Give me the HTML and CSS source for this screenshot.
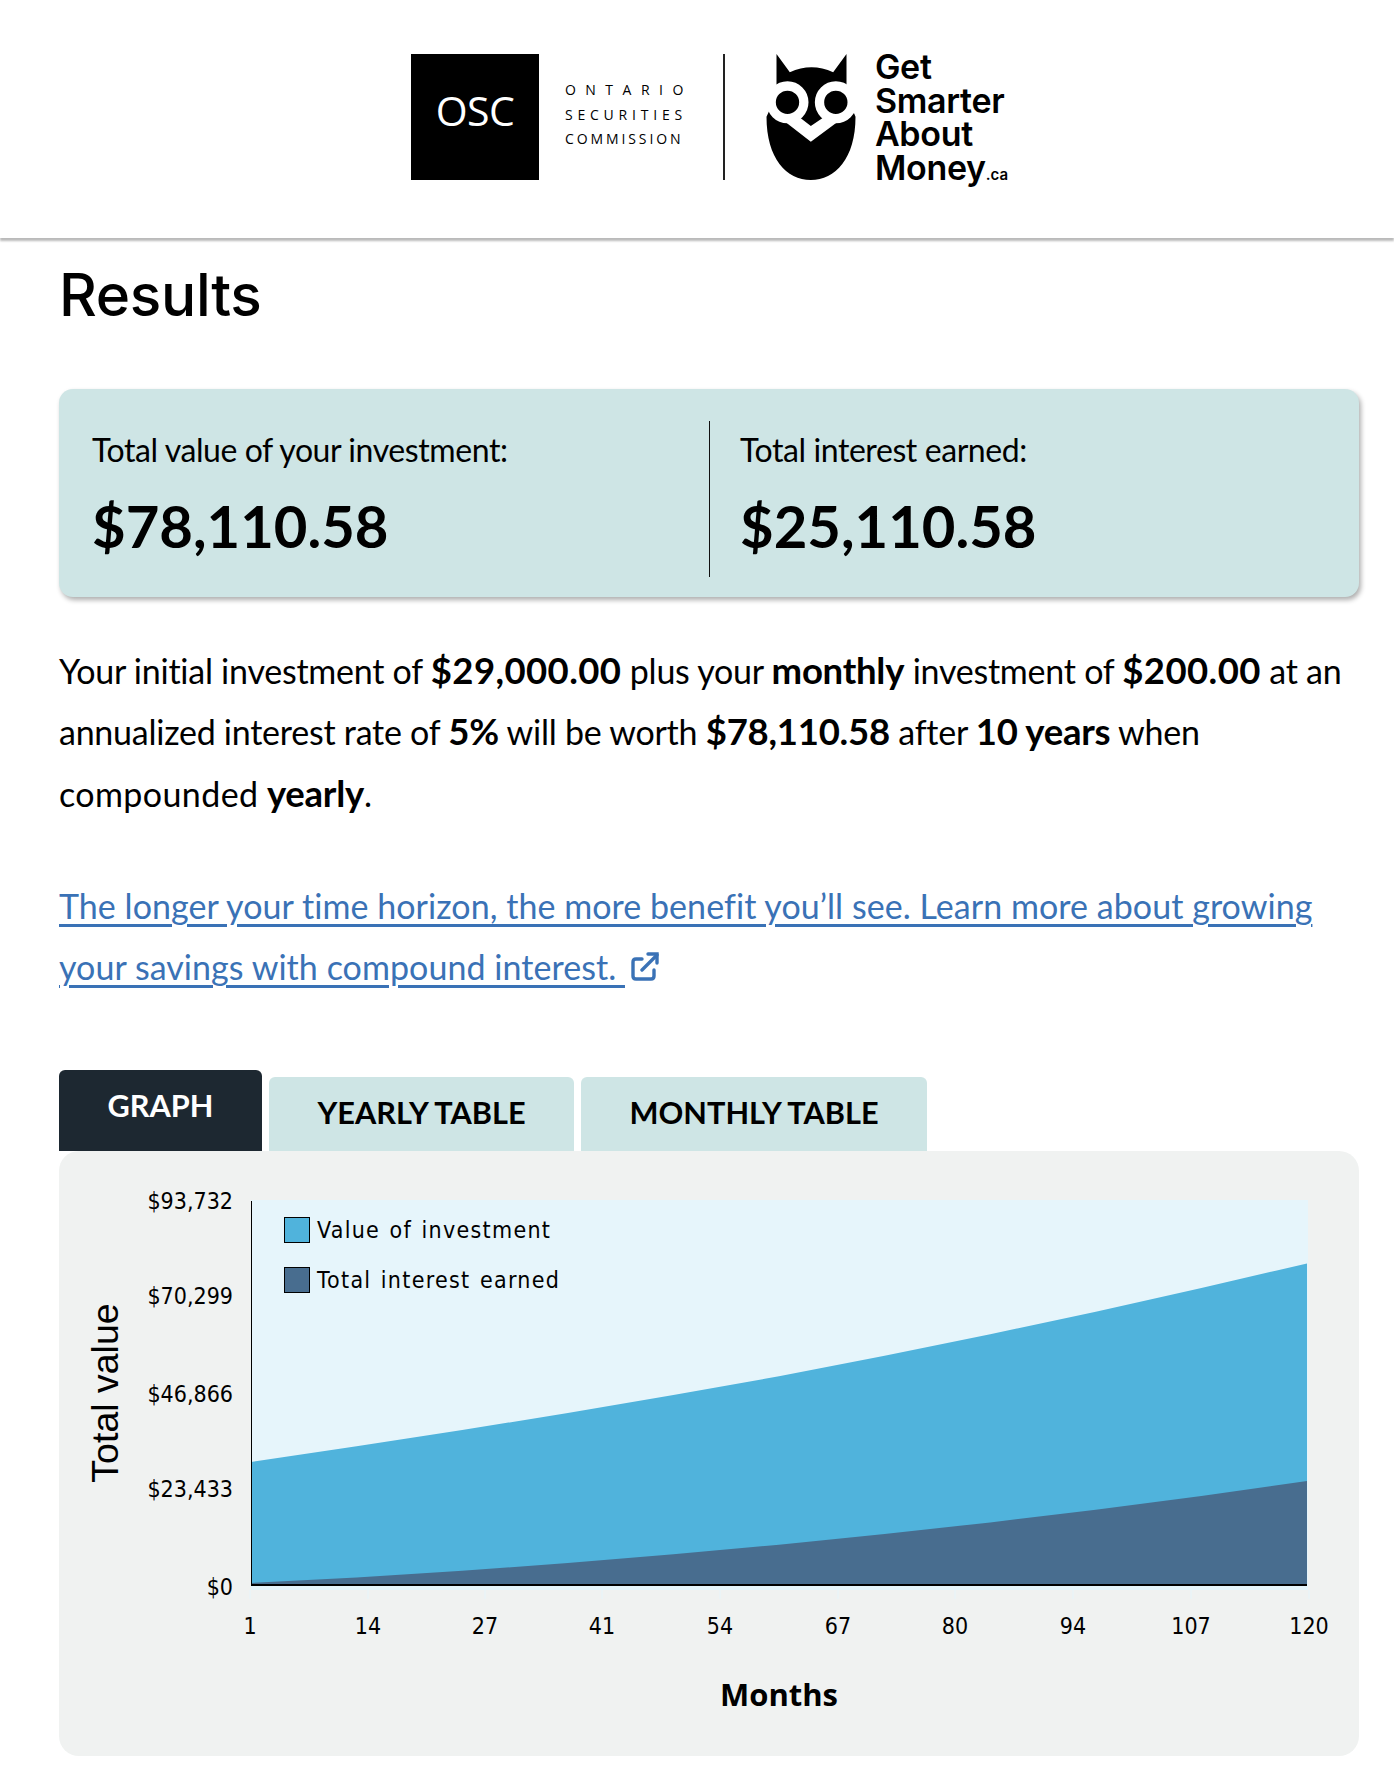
FILE: index.html
```html
<!DOCTYPE html>
<html lang="en">
<head>
<meta charset="utf-8">
<title>Compound interest results</title>
<link rel="stylesheet" href="styles.css">
</head>
<body>
<header class="site-header">
  <div class="osc-box">OSC</div>
  <div class="osc-name">
    <span class="osc-line osc-line-a">ONTARIO</span>
    <span class="osc-line osc-line-b">SECURITIES</span>
    <span class="osc-line osc-line-c">COMMISSION</span>
  </div>
  <div class="logo-divider"></div>
  <svg class="owl" viewBox="50 27 267 378" aria-hidden="true">
    <path d="M80 27 L120 82 Q185 52 250 82 L290 27 V150 L317 215 C317 340 256 405 183 405 C110 405 50 340 50 215 L80 150 Z" fill="#000"/>
    <circle cx="113" cy="172" r="49" fill="#000" stroke="#fff" stroke-width="28"/>
    <circle cx="258" cy="172" r="49" fill="#000" stroke="#fff" stroke-width="28"/>
    <path d="M100 226 L147 215 L183 243 L224 215 L270 226 L183 290 Z" fill="#fff"/>
  </svg>
  <div class="gsam">
    <span>Get</span>
    <span>Smarter</span>
    <span>About</span>
    <span>Money<small class="gsam-ca">.ca</small></span>
  </div>
</header>

<main class="content">
  <h1 class="title">Results</h1>

  <section class="summary">
    <div class="summary-col summary-left">
      <p class="summary-label">Total value of your investment:</p>
      <p class="summary-value">$78,110.58</p>
    </div>
    <div class="summary-col summary-right">
      <p class="summary-label">Total interest earned:</p>
      <p class="summary-value">$25,110.58</p>
    </div>
  </section>

  <p class="prose">Your initial investment of <b class="wide">$29,000.00</b> plus your <b>monthly</b> investment of <b class="wide">$200.00</b> at an annualized interest rate of <b>5%</b> will be worth <b>$78,110.58</b> after <b>10 years</b> when <span class="wide">compounded</span> <b>yearly</b>.</p>

  <p class="prose prose-link"><a class="link" href="#">The longer your time horizon, the more benefit you’ll see. Learn more about growing your savings with compound interest.&nbsp;</a><svg class="ext" viewBox="0 0 28 29" aria-hidden="true"><path d="M11 7 H5 Q2 7 2 10 V24 Q2 27 5 27 H20 Q23 27 23 24 V18" /><path d="M11 18 L26 3" /><path d="M17 2 H26 V11" /></svg></p>

  <nav class="tabs">
    <a class="tab tab-active" href="#">GRAPH</a>
    <a class="tab" href="#">YEARLY TABLE</a>
    <a class="tab" href="#">MONTHLY TABLE</a>
  </nav>

  <section class="panel">
    <svg class="chart" viewBox="0 0 1301 604" aria-label="Total value by month">
      <rect class="plot-bg" x="192" y="49" width="1057" height="390"/>
      <polygon class="area-value" points="192,434 192,311 297.6,295.2 403.2,279 508.8,262 614.4,244 720,225.3 825.6,204.8 931.2,183.3 1036.8,160.7 1142.4,137 1248,112.5 1248,434"/>
      <polygon class="area-interest" points="192,434 192,432 297.6,426.6 403.2,419.8 508.8,412 614.4,403.3 720,393.7 825.6,383.1 931.2,371.4 1036.8,358.7 1142.4,344.9 1248,330 1248,434"/>
      <line class="axis" x1="192.5" y1="50" x2="192.5" y2="434"/>
      <line class="axis axis-x" x1="192" y1="434" x2="1248" y2="434"/>

      <g class="ticks">
        <line x1="191" y1="439" x2="191" y2="448"/><line x1="309" y1="439" x2="309" y2="448"/>
        <line x1="426" y1="439" x2="426" y2="448"/><line x1="543" y1="439" x2="543" y2="448"/>
        <line x1="661" y1="439" x2="661" y2="448"/><line x1="779" y1="439" x2="779" y2="448"/>
        <line x1="896" y1="439" x2="896" y2="448"/><line x1="1014" y1="439" x2="1014" y2="448"/>
        <line x1="1132" y1="439" x2="1132" y2="448"/><line x1="1250" y1="439" x2="1250" y2="448"/>
      </g>

      <g class="y-labels">
        <text x="174" y="58">$93,732</text>
        <text x="174" y="153">$70,299</text>
        <text x="174" y="251">$46,866</text>
        <text x="174" y="346">$23,433</text>
        <text x="174" y="444">$0</text>
      </g>
      <g class="x-labels">
        <text x="191" y="483">1</text><text x="309" y="483">14</text>
        <text x="426" y="483">27</text><text x="543" y="483">41</text>
        <text x="661" y="483">54</text><text x="779" y="483">67</text>
        <text x="896" y="483">80</text><text x="1014" y="483">94</text>
        <text x="1132" y="483">107</text><text x="1250" y="483">120</text>
      </g>

      <rect class="swatch swatch-value" x="225.5" y="66.5" width="25" height="25"/>
      <text class="legend" x="258" y="87">Value of investment</text>
      <rect class="swatch swatch-interest" x="225.5" y="116.5" width="25" height="25"/>
      <text class="legend" x="258" y="137">Total interest earned</text>

      <text class="y-title" transform="translate(59 242) rotate(-90)">Total value</text>
      <text class="x-title" x="720" y="555">Months</text>
    </svg>
  </section>
</main>
</body>
</html>
```

FILE: styles.css
```css
* { box-sizing: border-box; }

html, body {
  margin: 0;
  padding: 0;
  background: #fff;
  color: #000;
  font-family: "Lato", "Noto Sans", sans-serif;
}

.site-header {
  display: flex;
  align-items: flex-start;
  justify-content: center;
  height: 238px;
  padding: 54px 0 0 25px;
  box-shadow: 0 3px 2px rgba(0, 0, 0, .27);
}

.osc-box {
  width: 128px;
  height: 126px;
  background: #000;
  color: #fff;
  font: 400 41px/112px "Open Sans", sans-serif;
  text-align: center;
  letter-spacing: -.6px;
}

.osc-name {
  display: flex;
  flex-direction: column;
  width: 120px;
  margin: 24px 0 0 26px;
  font-family: "Open Sans", sans-serif;
  font-size: 14px;
  line-height: 24.5px;
}

.osc-line { display: block; white-space: nowrap; }
.osc-line-a { letter-spacing: 9.5px; }
.osc-line-b { letter-spacing: 4.8px; }
.osc-line-c { letter-spacing: 2.9px; }

.logo-divider {
  width: 2px;
  height: 126px;
  margin-left: 38px;
  background: #222;
}

.owl {
  width: 90px;
  height: 126px;
  margin-left: 41px;
}

.gsam {
  display: flex;
  flex-direction: column;
  margin: -4px 0 0 19px;
  font-family: "Inter", sans-serif;
  font-weight: 600;
  font-size: 34px;
  line-height: 33.5px;
  letter-spacing: -.3px;
}

.gsam-ca { font-size: 15px; font-weight: 600; letter-spacing: 0; }

.content { padding: 0 35px 27px 59px; }

.title {
  margin: 0;
  padding-top: 22px;
  font-family: "Inter", sans-serif;
  font-weight: 500;
  font-size: 58.5px;
  line-height: 70px;
  letter-spacing: -.3px;
}

.summary {
  display: flex;
  height: 208px;
  margin-top: 59px;
  padding: 32px 0;
  background: #cee5e5;
  border-radius: 14px;
  box-shadow: 2px 3px 5px rgba(0, 0, 0, .32);
}

.summary-col { height: 156px; }
.summary-left { width: 651px; padding-left: 33px; border-right: 1px solid #111; }
.summary-right { padding-left: 30px; }

.summary-label {
  margin: 0;
  padding-top: 7px;
  font-size: 32px;
  line-height: 44px;
  letter-spacing: -.42px;
}

.summary-value {
  margin: 19px 0 0;
  font-weight: 700;
  font-size: 58px;
  line-height: 70px;
}

.prose {
  margin: 43px 0 0;
  font-size: 34px;
  line-height: 61.3px;
  letter-spacing: -.25px;
}

.prose b { font-size: 36.5px; line-height: 1; }
.prose .wide { letter-spacing: .4px; }

.prose-link { margin-top: 51px; letter-spacing: .05px; }

.link { color: #3a72b6; text-decoration: underline; text-decoration-thickness: 2.5px; text-underline-offset: 5px; }

.ext {
  display: inline-block;
  width: 28px;
  height: 29px;
  margin-left: 6px;
  vertical-align: -1px;
  fill: none;
  stroke: #3a72b6;
  stroke-width: 3.4;
  stroke-linecap: round;
}

.tabs {
  display: flex;
  align-items: flex-end;
  gap: 7px;
  margin-top: 73px;
}

.tab {
  display: block;
  padding: 17px 48.5px 19px;
  height: 74px;
  background: #cee5e5;
  color: #000;
  border-radius: 6px 6px 0 0;
  font-weight: 700;
  font-size: 30.7px;
  line-height: 38px;
  text-decoration: none;
  white-space: nowrap;
}

.tab-active {
  height: 81px;
  background: #1d2831;
  color: #fff;
}

.panel {
  height: 605px;
  background: #f0f2f1;
  border-radius: 20px;
}

.chart { display: block; width: 1301px; height: 604px; }

.plot-bg { fill: #e6f5fb; }
.area-value { fill: #50b3dc; }
.area-interest { fill: #486d8f; }
.axis { stroke: #000; stroke-width: 1; }
.axis-x { stroke-width: 2; }
.ticks line { stroke: #e6f5fb; stroke-width: 1; }

.y-labels text, .x-labels text, .legend {
  font-family: "DejaVu Sans Condensed", "DejaVu Sans", sans-serif;
  font-stretch: condensed;
  font-size: 23px;
  fill: #000;
}

.legend { letter-spacing: 1.3px; word-spacing: 1.5px; }

.y-labels text { text-anchor: end; }
.x-labels text { text-anchor: middle; }

.swatch { stroke: #000; stroke-width: 1; }
.swatch-value { fill: #50b3dc; }
.swatch-interest { fill: #486d8f; }

.y-title {
  font-family: "Liberation Sans", sans-serif;
  font-size: 37.5px;
  text-anchor: middle;
  fill: #000;
}

.x-title {
  font-family: "Open Sans", sans-serif;
  font-weight: 700;
  font-size: 31px;
  text-anchor: middle;
  fill: #000;
}
```
